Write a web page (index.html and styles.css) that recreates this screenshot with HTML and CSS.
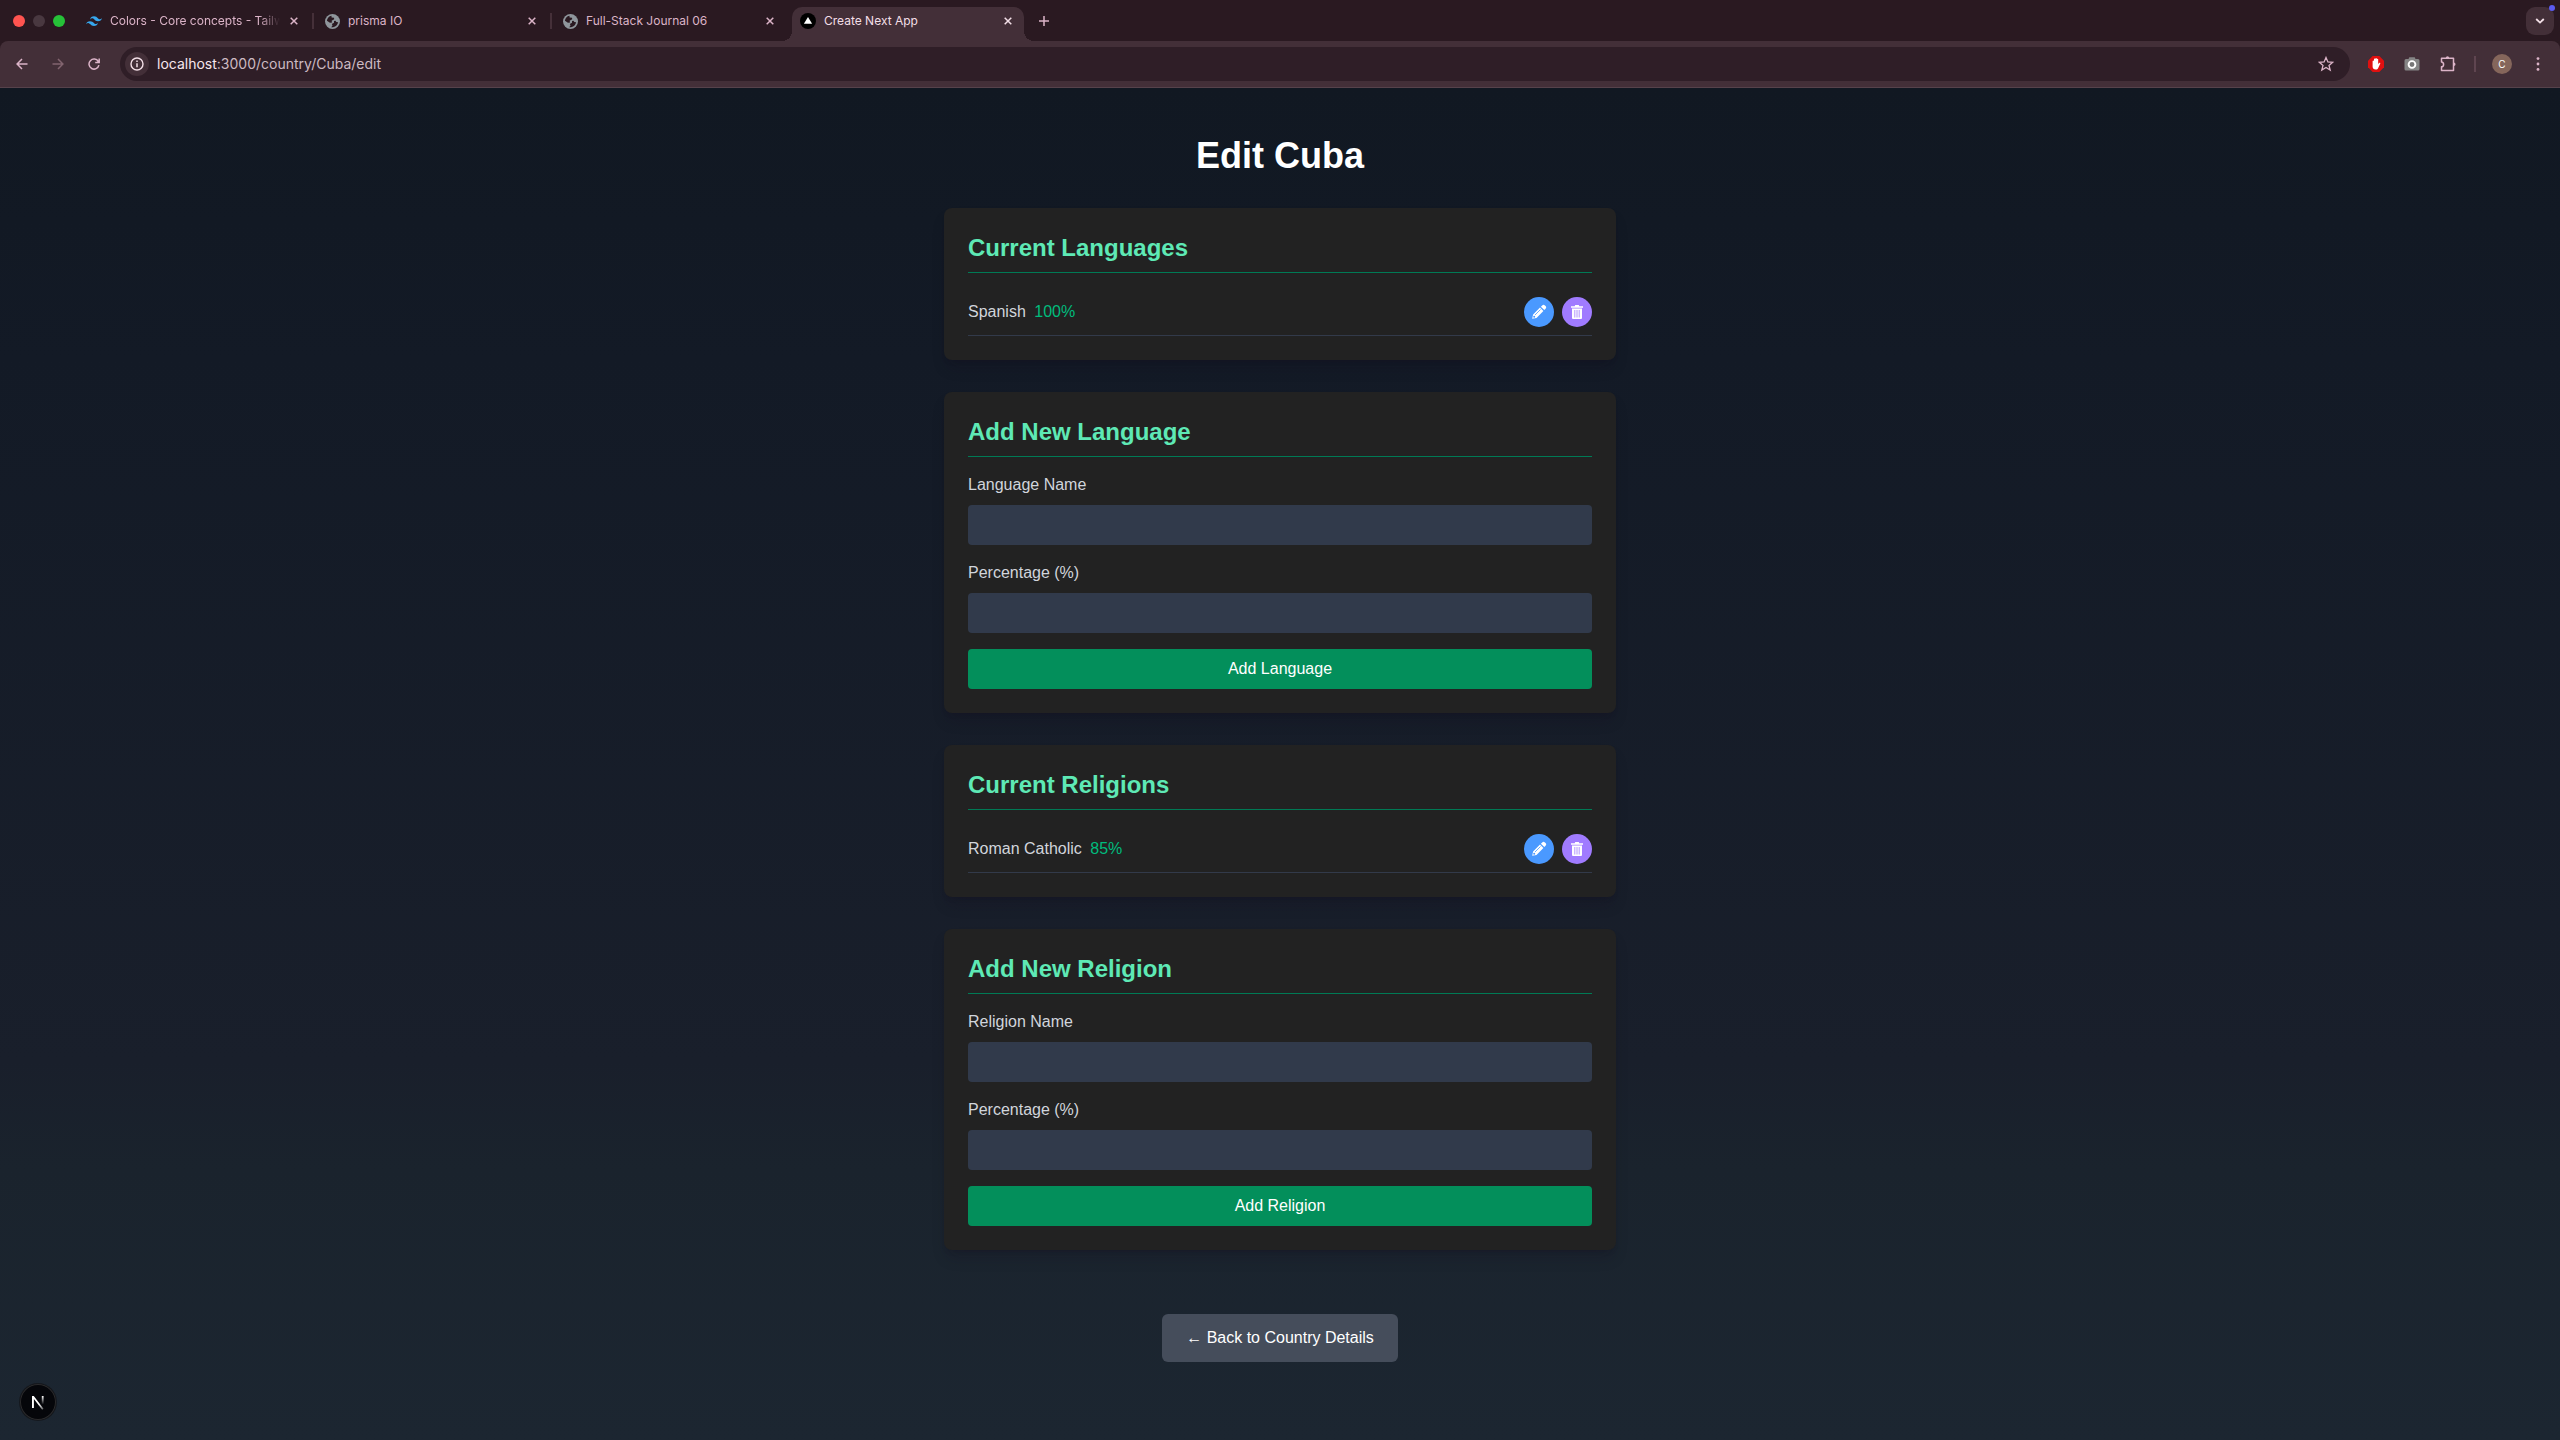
FILE: index.html
```html
<!DOCTYPE html>
<html lang="en">
<head>
<meta charset="utf-8">
<title>Create Next App</title>
<link rel="stylesheet" href="styles.css">
</head>
<body>
<svg class="defs" aria-hidden="true">
  <symbol id="globe" viewBox="0 0 14 14"><circle cx="7" cy="7" r="7" fill="#8f969c"/><path d="M6 1.6C3.700 2 2 4 1.800 6.400L4.600 8.200 6.600 8 6.200 6.200 8.600 5 8.400 3.600 6.200 3.200ZM8.400 8.200 6.400 9.400 7 10.800 5.800 12.400C8.800 12.700 11.800 10.600 12.200 7.600L10.600 7.400 9.800 6.200 8.400 6.600Z" fill="#2a1921"/></symbol>
  <symbol id="close" viewBox="0 0 8 8"><path d="M.7.7l6.600 6.600M7.300.7L.7 7.300" stroke="currentColor" stroke-width="1.500"/></symbol>
  <symbol id="pencil" viewBox="0 0 16 16"><path d="M1.200 14.800l.9-4.300 6.900-6.900 3.400 3.400-6.900 6.900zM9.900 2.700l1.300-1.300a1.900 1.900 0 0 1 2.700 0l.7.7a1.900 1.900 0 0 1 0 2.700l-1.300 1.300z" fill="currentColor"/><path d="M4 11l5.500-5.500" stroke="#4a99ff" stroke-width=".8"/><circle cx="3.200" cy="12.700" r="1" fill="#4a99ff"/></symbol>
  <symbol id="trash" viewBox="0 0 16 16"><path d="M2 2.200h3.700L6.200 1h3.600l.5 1.200H14v1.600H2z" fill="currentColor"/><path d="M3 4.600h10V14a1 1 0 0 1-1 1H4a1 1 0 0 1-1-1z" fill="currentColor"/><path d="M5.800 6v7.500M8 6v7.500M10.200 6v7.500" stroke="#a07bff" stroke-width=".8"/></symbol>
</svg>

<header class="browser">
  <div class="tabbar">
    <div class="lights"><span class="light red"></span><span class="light grey"></span><span class="light green"></span></div>
    <div class="tab first">
      <svg class="fav" viewBox="0 0 24 24"><path d="M12 5C8.800 5 6.800 6.600 6 9.800c1.200-1.600 2.600-2.200 4.200-1.800.9.200 1.600.9 2.300 1.700C13.700 10.900 15 12.300 18 12.300c3.200 0 5.200-1.600 6-4.800-1.200 1.600-2.600 2.200-4.200 1.800-.9-.2-1.600-.9-2.300-1.700C16.300 6.400 15 5 12 5zM6 12.200c-3.200 0-5.200 1.600-6 4.800 1.200-1.600 2.600-2.200 4.200-1.800.9.200 1.600.9 2.300 1.700C7.700 18.100 9 19.500 12 19.500c3.200 0 5.200-1.600 6-4.800-1.200 1.600-2.600 2.200-4.200 1.800-.9-.2-1.600-.9-2.300-1.700C10.300 13.600 9 12.200 6 12.200z" fill="#36a7ee"/></svg>
      <span class="title fade">Colors - Core concepts - Tailw</span>
      <button class="x" aria-label="Close tab"><svg><use href="#close"/></svg></button>
    </div>
    <div class="tab">
      <svg class="fav"><use href="#globe"/></svg>
      <span class="title">prisma IO</span>
      <button class="x" aria-label="Close tab"><svg><use href="#close"/></svg></button>
    </div>
    <div class="tab last">
      <svg class="fav"><use href="#globe"/></svg>
      <span class="title">Full-Stack Journal 06</span>
      <button class="x" aria-label="Close tab"><svg><use href="#close"/></svg></button>
    </div>
    <div class="tab active">
      <svg class="fav" viewBox="0 0 14 14"><circle cx="7" cy="7" r="7" fill="#000"/><path d="M7 3.500l3.600 6H3.400z" fill="#fff"/></svg>
      <span class="title">Create Next App</span>
      <button class="x" aria-label="Close tab"><svg><use href="#close"/></svg></button>
    </div>
    <button class="newtab" aria-label="New tab"><svg viewBox="0 0 10 10"><path d="M5 0v10M0 5h10" stroke="currentColor" stroke-width="1.500"/></svg></button>
    <button class="tabsearch" aria-label="Search tabs"><svg viewBox="0 0 10 6"><path d="M1.200 1L5 4.600 8.800 1" fill="none" stroke="currentColor" stroke-width="1.800"/></svg></button>
  </div>
  <div class="toolbar">
    <nav class="nav">
      <button aria-label="Back"><svg viewBox="0 0 12 12"><path d="M11.500 6H1.200M6 1L1.100 6 6 11" fill="none" stroke="currentColor" stroke-width="1.500"/></svg></button>
      <button class="dim" aria-label="Forward"><svg viewBox="0 0 12 12"><path d="M.5 6h10.300M6 1l4.900 5L6 11" fill="none" stroke="currentColor" stroke-width="1.500"/></svg></button>
      <button aria-label="Reload"><svg viewBox="0 0 12 12"><path d="M10.300 3.500A5 5 0 1 0 10.900 7.200M11.200.4v4H7.200" fill="none" stroke="currentColor" stroke-width="1.500"/></svg></button>
    </nav>
    <div class="omnibox">
      <button class="info" aria-label="Site information"><svg viewBox="0 0 14 14"><circle cx="7" cy="7" r="6" fill="none" stroke="currentColor" stroke-width="1.400"/><path d="M7 6.200v4M7 3.600v1.500" stroke="currentColor" stroke-width="1.500"/></svg></button>
      <span class="url"><b>localhost</b>:3000/country/Cuba/edit</span>
      <button class="star" aria-label="Bookmark"><svg viewBox="0 0 16 16"><path d="M8 1.500l1.900 4.400 4.800.4-3.700 3.100 1.200 4.700L8 11.500l-4.200 2.600L5 9.400 1.300 6.300l4.800-.4z" fill="none" stroke="currentColor" stroke-width="1.300"/></svg></button>
    </div>
    <div class="ext">
      <button aria-label="Ad blocker"><svg viewBox="0 0 16 16"><path d="M4.700 0h6.600L16 4.700v6.600L11.300 16H4.700L0 11.300V4.700z" fill="#e01010"/><path d="M4.600 8.500V5.200a.7.700 0 0 1 1.400 0V3.300a.7.700 0 0 1 1.400 0v-.6a.7.700 0 0 1 1.400 0v.7a.7.700 0 0 1 1.400 0V8l1-1c.6-.5 1.400 0 1 .7l-2 4.300c-.5 1-1.200 1.500-2.500 1.500-2 0-3.100-1.200-3.100-3z" fill="#fff"/></svg></button>
      <button aria-label="Screenshot"><svg viewBox="0 0 16 16"><path d="M4.500 3l.8-1.800h5.400L11.500 3H14a1.500 1.500 0 0 1 1.500 1.500V13a1.500 1.500 0 0 1-1.500 1.500H2A1.500 1.500 0 0 1 .5 13V4.500A1.500 1.500 0 0 1 2 3z" fill="#858585"/><circle cx="8" cy="8.500" r="3.400" fill="#777" stroke="#fff" stroke-width="1.900"/></svg></button>
      <button aria-label="Extensions"><svg viewBox="0 0 16 16"><path d="M1.500 2.200h12v12.300h-12v-3.700c2.800-.2 2.800-4.600 0-4.800z" fill="none" stroke="currentColor" stroke-width="1.500" stroke-linejoin="round"/><path d="M5.800 2a1.700 1.700 0 0 1 3.400 0zM13.800 6.600a1.700 1.700 0 0 1 0 3.400z" fill="currentColor"/></svg></button>
      <span class="sep"></span>
      <button class="avatar">C</button>
      <button class="menu" aria-label="Menu"><svg viewBox="0 0 4 14"><circle cx="2" cy="1.600" r="1.400" fill="currentColor"/><circle cx="2" cy="7" r="1.400" fill="currentColor"/><circle cx="2" cy="12.400" r="1.400" fill="currentColor"/></svg></button>
    </div>
  </div>
</header>

<main class="page">
  <h1>Edit Cuba</h1>

  <section class="card">
    <h2>Current Languages</h2>
    <ul>
      <li>
        <span>Spanish <span class="pct">100%</span></span>
        <span class="actions">
          <button class="round edit" aria-label="Edit Spanish"><svg><use href="#pencil"/></svg></button>
          <button class="round delete" aria-label="Delete Spanish"><svg><use href="#trash"/></svg></button>
        </span>
      </li>
    </ul>
  </section>

  <section class="card">
    <h2>Add New Language</h2>
    <form>
      <div class="field"><label for="lang">Language Name</label><input id="lang" type="text"></div>
      <div class="field"><label for="lang-pct">Percentage (%)</label><input id="lang-pct" type="text"></div>
      <button class="submit" type="button">Add Language</button>
    </form>
  </section>

  <section class="card">
    <h2>Current Religions</h2>
    <ul>
      <li>
        <span>Roman Catholic <span class="pct">85%</span></span>
        <span class="actions">
          <button class="round edit" aria-label="Edit Roman Catholic"><svg><use href="#pencil"/></svg></button>
          <button class="round delete" aria-label="Delete Roman Catholic"><svg><use href="#trash"/></svg></button>
        </span>
      </li>
    </ul>
  </section>

  <section class="card">
    <h2>Add New Religion</h2>
    <form>
      <div class="field"><label for="rel">Religion Name</label><input id="rel" type="text"></div>
      <div class="field"><label for="rel-pct">Percentage (%)</label><input id="rel-pct" type="text"></div>
      <button class="submit" type="button">Add Religion</button>
    </form>
  </section>

  <a class="back" href="#">← Back to Country Details</a>
</main>

<button class="devtools" aria-label="Next.js dev tools">
  <svg viewBox="0 0 36 36">
    <defs>
      <linearGradient id="n1" x1="0" y1="0" x2="1" y2="1"><stop offset=".6" stop-color="#fff"/><stop offset="1" stop-color="#fff" stop-opacity=".3"/></linearGradient>
      <linearGradient id="n2" x1="0" y1="0" x2="0" y2="1"><stop offset="0" stop-color="#fff"/><stop offset="1" stop-color="#fff" stop-opacity="0"/></linearGradient>
    </defs>
    <path d="M12 24V12h1.800l9.700 12.800-1.300 1L13.900 15v9z" fill="url(#n1)"/>
    <path d="M21.800 12h1.800v8.500h-1.800z" fill="url(#n2)"/>
  </svg>
</button>
</body>
</html>
```
FILE: styles.css
```css
* { box-sizing: border-box; margin: 0; padding: 0; }
button { border: 0; background: none; color: inherit; font: inherit; display: flex; align-items: center; justify-content: center; flex: none; }
svg { display: block; flex: none; }
.defs { position: absolute; width: 0; height: 0; }
body { min-height: 100vh; display: flex; flex-direction: column; font: 16px/24px "Liberation Sans", Arial, sans-serif; color: #d1d5dc; }

/* browser window */
.browser { font-family: Inter, sans-serif; background: #2a1921; color: #dcb4c8; }
.tabbar { display: flex; height: 41px; align-items: flex-end; }
.lights { display: flex; gap: 8px; padding-left: 13px; height: 41px; align-items: center; width: 72px; flex: none; }
.light { width: 12px; height: 12px; border-radius: 50%; flex: none; }
.red { background: #ff5450; }
.grey { background: #493840; }
.green { background: #26c138; }
.tab { position: relative; display: flex; align-items: center; height: 34px; padding: 0 14px 6px 11px; width: 238px; gap: 8px; font-size: 12px; line-height: 16px; }
.tab.first { width: 242px; padding-left: 14px; }
.tab:not(.active)::after { content: ""; position: absolute; right: 0; top: 6px; width: 2px; height: 16px; background: #453039; }
.tab.last::after { display: none; }
.fav { width: 15px; height: 15px; }
.first .fav, .active .fav { width: 16px; height: 16px; }
.title { flex: 1; min-width: 0; white-space: nowrap; }
.fade { mask-image: linear-gradient(to right, #000 88%, transparent); }
.x svg { width: 8px; height: 8px; }
.x { width: 12px; height: 16px; }
.tab.active { width: 232px; margin-left: 2px; background: #432f38; color: #f3dfe7; border-radius: 10px 10px 0 0; padding: 0 10px 6px 8px; }
.tab.active::before, .tab.active::after { content: ""; position: absolute; bottom: 0; width: 10px; height: 10px; }
.tab.active::before { right: 100%; background: radial-gradient(circle at 0 0, transparent 10px, #432f38 10px); }
.tab.active::after { left: 100%; background: radial-gradient(circle at 100% 0, transparent 10px, #432f38 10px); }
.newtab { width: 40px; height: 34px; padding-bottom: 6px; }
.newtab svg { width: 10px; height: 10px; }
.tabsearch { position: relative; margin: 0 6px 6px auto; width: 28px; height: 28px; border-radius: 9px; background: #432f38; color: #f3dfe7; }
.tabsearch svg { width: 10px; height: 6px; }
.tabsearch::after { content: ""; position: absolute; right: -1px; top: -2px; width: 6px; height: 6px; border-radius: 50%; background: #5b5bf0; }
.toolbar { display: flex; align-items: center; height: 47px; padding: 0 16px 1px; background: #432f38; border-bottom: 1px solid #56424b; border-radius: 8px 8px 0 0; }
.nav { display: flex; gap: 24px; padding-right: 20px; }
.nav svg { width: 12px; height: 12px; }
.dim { color: #82646f; }
.omnibox { flex: 1; display: flex; align-items: center; height: 34px; border-radius: 17px; background: #2f1e27; padding: 0 16px 0 5px; }
.info { width: 24px; height: 24px; border-radius: 50%; background: #432f38; color: #f3dfe7; }
.info svg { width: 14px; height: 14px; }
.url { flex: 1; padding-left: 8px; font-size: 14px; line-height: 20px; color: #cdbac2; }
.url b { font-weight: 400; color: #f7e6ed; }
.star svg { width: 16px; height: 16px; }
.ext { display: flex; align-items: center; padding-left: 18px; gap: 20px; }
.ext svg { width: 16px; height: 16px; }
.sep { width: 2px; height: 16px; background: #5f4550; margin-left: -2px; }
.avatar { width: 20px; height: 20px; border-radius: 50%; background: #85665b; color: #fff; font-size: 10px; line-height: 20px; margin-left: -4px; }
.menu { width: 12px; }
.ext .menu svg { width: 4px; height: 14px; }

/* page */
.page { flex: 1; display: flex; flex-direction: column; align-items: center; padding: 48px 24px; background: linear-gradient(to bottom, #111822, #131a26 20%, #191f2b 72%, #1a232d 80%, #1c2631); }
h1 { font-size: 36px; line-height: 40px; color: #fff; margin-bottom: 32px; }
.card { width: 100%; max-width: 672px; padding: 24px; margin-bottom: 32px; border-radius: 8px; background: #222; box-shadow: 0 10px 15px -3px rgba(20, 10, 30, .2), 0 4px 6px -4px rgba(20, 10, 30, .2); }
h2 { font-size: 24px; line-height: 32px; padding-bottom: 8px; margin-bottom: 16px; color: #5ee9b5; border-bottom: 1px solid #007a55; }
ul { list-style: none; }
li { display: flex; align-items: center; justify-content: space-between; padding: 8px 0; border-bottom: 1px solid #323a4a; }
.pct { color: #00bc7d; margin-left: 4px; }
.actions { display: flex; gap: 8px; }
.round { width: 30px; height: 30px; border-radius: 50%; color: #fff; }
.round svg { width: 16px; height: 16px; }
.edit { background: #4a99ff; }
.delete { background: #a07bff; }
form { display: flex; flex-direction: column; gap: 16px; }
.field { display: flex; flex-direction: column; gap: 8px; }
input { height: 40px; padding: 8px; border: 0; border-radius: 4px; background: #313a4b; color: #fff; font: inherit; }
.submit { height: 40px; border-radius: 4px; background: #038f5b; color: #fff; }
.back { margin-top: 32px; padding: 12px 24px; border-radius: 6px; background: #454d5b; color: #fff; text-decoration: none; }
.devtools { position: fixed; left: 20px; bottom: 20px; width: 36px; height: 36px; border-radius: 50%; background: #05060a; box-shadow: inset 0 0 0 1px #2b2b2d, 0 0 0 1px #15181d; }
.devtools svg { width: 36px; height: 36px; }
```
